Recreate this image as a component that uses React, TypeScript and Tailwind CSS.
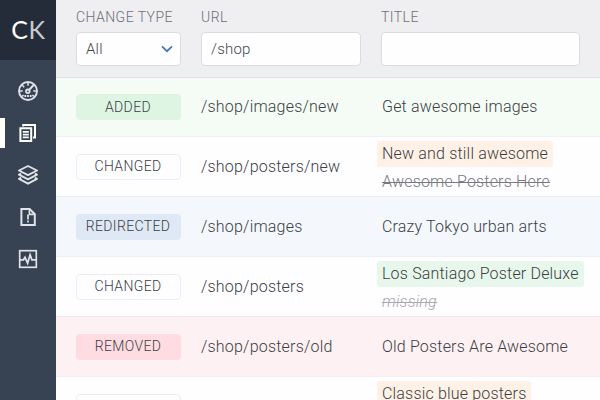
import React from "react";

type Row = {
  kind: string;
  url: string;
  title: string;
  bg: string;
  badge: string;
  mark?: string;
  old?: string;
  missing?: boolean;
};

const plainBadge = "border border-[#eeedf2]";

const rows: Row[] = [
  { kind: "ADDED", url: "/shop/images/new", title: "Get awesome images", bg: "bg-[#f4fcf5] border-[#f1f1f4]", badge: "bg-[#dff5e4]" },
  { kind: "CHANGED", url: "/shop/posters/new", title: "New and still awesome", bg: "bg-[#fefdff] border-[#ededf2]", badge: plainBadge, mark: "bg-[#fff1e6]", old: "Awesome Posters Here" },
  { kind: "REDIRECTED", url: "/shop/images", title: "Crazy Tokyo urban arts", bg: "bg-[#f4f8fd] border-[#f0f0f4]", badge: "bg-[#dfe8f5]" },
  { kind: "CHANGED", url: "/shop/posters", title: "Los Santiago Poster Deluxe", bg: "bg-[#fefdff] border-[#f1e6ec]", badge: plainBadge, mark: "bg-[#e8f7eb]", old: "missing", missing: true },
  { kind: "REMOVED", url: "/shop/posters/old", title: "Old Posters Are Awesome", bg: "bg-[#fef1f4] border-[#f3eff4]", badge: "bg-[#fedce1]" },
  { kind: "CHANGED", url: "/shop/posters/blue", title: "Classic blue posters", bg: "bg-[#fefdff] border-[#ededf2]", badge: plainBadge, mark: "bg-[#fff1e6]", old: "" },
];

function GaugeIcon() {
  return (
    <svg width="20" height="20" viewBox="0 0 20 20" fill="none" stroke="#dfe3e8" strokeWidth="1.5">
      <circle cx="10" cy="10" r="9" strokeWidth="1.9" />
      <path d="M10 1.5v3.2M1.5 10h3.2M15.3 10h3.2M4 4l2.2 2.2M4 15.4l1.6-1.2M16 15.4l-1.6-1.2" />
      <path d="M11 9l4.6-5" strokeWidth="2" />
      <circle cx="9.8" cy="10.3" r="1.8" strokeWidth="1.8" />
      <path d="M6.4 15h1.8M9.1 15h1.8M11.8 15h1.8" strokeWidth="2" />
    </svg>
  );
}

function PagesIcon() {
  return (
    <svg width="20" height="20" viewBox="0 0 20 20" fill="none" stroke="#ffffff" strokeWidth="2">
      <path d="M5.2 3.4V2H17v12.6h-2" />
      <path d="M2.4 5.2h10.8v12.8H2.4z" />
      <path d="M4.8 8.8h6M4.8 11.6h6M4.8 14.4h6" strokeWidth="1.7" />
    </svg>
  );
}

function LayersIcon() {
  return (
    <svg width="20" height="20" viewBox="0 0 20 20" fill="none" stroke="#dfe3e8" strokeWidth="1.9" strokeLinejoin="round">
      <path d="M10 1l9 4.5-9 4.6-9-4.6z" />
      <path d="M3.2 8.5L1 9.7l9 4.7 9-4.7-2.2-1.2" />
      <path d="M3.2 12.7L1 13.9l9 4.8 9-4.8-2.2-1.2" />
    </svg>
  );
}

function FileAlertIcon() {
  return (
    <svg width="20" height="20" viewBox="0 0 20 20" fill="none" stroke="#dfe3e8" strokeWidth="2">
      <path d="M3.4 2h8.2l5.2 5.2v10.9H3.4z" />
      <path d="M11.4 2v5.4h5.2" strokeWidth="1.6" />
      <path d="M10 7.6v4.8M10 13.6v2" strokeWidth="1.7" />
    </svg>
  );
}

function PulseIcon() {
  return (
    <svg width="20" height="20" viewBox="0 0 20 20" fill="none" stroke="#dfe3e8" strokeWidth="1.7">
      <rect x="1.7" y="1.7" width="16.6" height="16.6" />
      <path d="M2 10.8h3.4l1.6-2.4 2.6 5.8 2.5-8.4 1.8 5H18" strokeWidth="1.8" />
    </svg>
  );
}

const nav = [GaugeIcon, PagesIcon, LayersIcon, FileAlertIcon, PulseIcon];

export default function App() {
  return (
    <div className="flex h-[400px] w-[600px] overflow-hidden bg-[#fefdff] font-['Roboto',sans-serif] font-light text-[#3b3e43]">
      <aside className="flex w-14 shrink-0 flex-col bg-[#374252]">
        <div className="flex h-[60px] items-center justify-center bg-[#252c39] pl-px font-['Lato',sans-serif] text-[25px] font-normal tracking-[0.7px]">
          <span className="text-white">C</span>
          <span className="text-[#c5cad3]">K</span>
        </div>
        <nav className="flex flex-col pt-[10px]">
          {nav.map((Icon, i) => (
            <div key={i} className="flex h-[42px] items-center">
              <span className={i === 1 ? "h-[30px] w-[5px] bg-white" : "w-[5px]"} />
              <span className="ml-[13px]"><Icon /></span>
            </div>
          ))}
        </nav>
      </aside>
      <main className="flex min-w-0 flex-1 flex-col">
        <header className="flex h-[78px] shrink-0 gap-5 border-b border-[#e0e0e8] bg-[#efeef1] pt-[9px] pl-5 text-[14px] leading-[17px] tracking-[0.45px] text-[#6c6e76]">
          <label className="flex w-[105px] flex-col gap-[6px]">
            <span className="whitespace-nowrap">CHANGE TYPE</span>
            <span className="flex h-[34px] items-center justify-between rounded border border-[#dcdbe0] bg-[#fefdff] pr-[7px] pl-[9px] text-[15px] tracking-[0.2px] text-[#44474c]">
              All
              <svg width="12" height="8" viewBox="0 0 12 8" fill="none" stroke="#4977ad" strokeWidth="1.8">
                <path d="M1 1.4l5 4.8 5-4.8" />
              </svg>
            </span>
          </label>
          <label className="flex w-[160px] flex-col gap-[6px]">
            <span>URL</span>
            <span className="flex h-[34px] items-center rounded border border-[#dcdbe0] bg-[#fefdff] pl-[9px] text-[15px] tracking-[0.2px] text-[#44474c]">/shop</span>
          </label>
          <label className="flex w-[199px] flex-col gap-[6px]">
            <span>TITLE</span>
            <span className="h-[34px] rounded border border-[#dcdbe0] bg-[#fefdff]" />
          </label>
        </header>
        {rows.map((r, i) => (
          <div key={i} className={`flex shrink-0 items-center border-b pl-5 ${i === 0 ? "h-[59px]" : "h-[60px]"} ${r.bg}`}>
            <div className={`flex h-[26px] w-[105px] items-center justify-center rounded pr-px text-[14px] tracking-[0.35px] ${r.badge}`}>{r.kind}</div>
            <div className="ml-5 w-[176px] text-[16px] tracking-[0.2px]">{r.url}</div>
            <div className={`flex flex-1 flex-col items-start text-[16px] tracking-[0.18px] whitespace-nowrap ${r.mark ? "pt-[2px]" : ""}`}>
              <span className={`rounded-[3px] px-[5px] leading-[26px] ${r.mark ?? ""}`}>{r.title}</span>
              {r.old !== undefined && (
                <span className={`mt-[3px] h-6 px-[5px] leading-[24px] line-through decoration-1 ${r.missing ? "text-[#a8a8ad] italic" : "text-[#77797e]"}`}>{r.old}</span>
              )}
            </div>
          </div>
        ))}
      </main>
    </div>
  );
}
